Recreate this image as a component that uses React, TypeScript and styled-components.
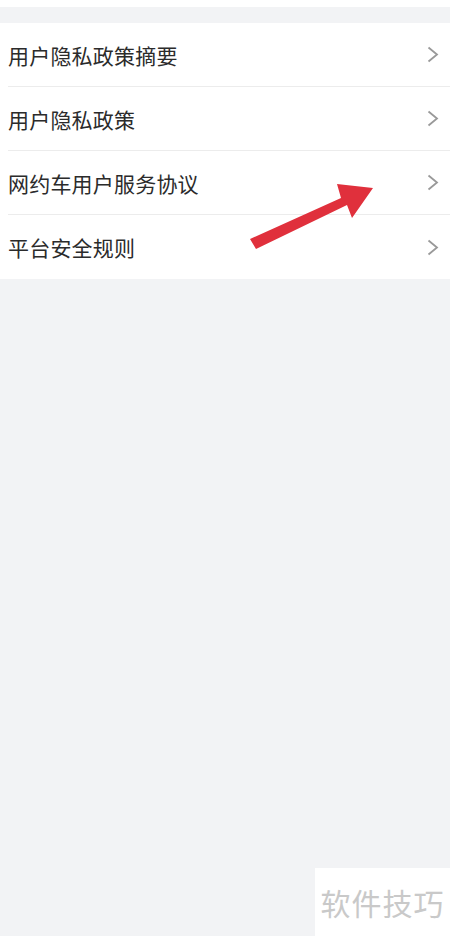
import styled, { createGlobalStyle } from "styled-components";

const GlobalStyle = createGlobalStyle`
  html, body {
    margin: 0;
    padding: 0;
    background: #f2f3f5;
  }
  body {
    font-family: "Noto Sans CJK SC", "Noto Sans", sans-serif;
  }
`;

const Page = styled.div`
  width: 450px;
  height: 936px;
  background: #f2f3f5;
  display: flex;
  flex-direction: column;
  position: relative;
  overflow: hidden;
`;

const TopStrip = styled.div`
  height: 7px;
  background: #ffffff;
`;

const Gap = styled.div`
  height: 16px;
`;

const List = styled.div`
  background: #ffffff;
  display: flex;
  flex-direction: column;
`;

const Row = styled.div<{ $last?: boolean }>`
  height: 64px;
  margin-left: 8px;
  padding-right: 11px;
  display: flex;
  align-items: center;
  justify-content: space-between;
  border-bottom: ${(p) => (p.$last ? "none" : "1px solid #ececec")};
  box-sizing: border-box;
`;

const Label = styled.span`
  font-size: 21px;
  color: #2b2b2b;
  letter-spacing: 0.2px;
`;

const Chevron = styled.svg`
  width: 12px;
  height: 17px;
  display: block;
`;

const Arrow = styled.svg`
  position: absolute;
  left: 0;
  top: 0;
  pointer-events: none;
`;

const Filler = styled.div`
  flex: 1;
  display: flex;
  align-items: flex-end;
  justify-content: flex-end;
`;

const Watermark = styled.div`
  width: 135px;
  height: 68px;
  background: #ffffff;
  display: flex;
  align-items: center;
  justify-content: center;
  font-size: 30px;
  color: #c9c9c9;
  letter-spacing: 1px;
`;

const items = ["用户隐私政策摘要", "用户隐私政策", "网约车用户服务协议", "平台安全规则"];

export default function App() {
  return (
    <Page>
      <GlobalStyle />
      <TopStrip />
      <Gap />
      <List>
        {items.map((t, i) => (
          <Row key={t} $last={i === items.length - 1}>
            <Label>{t}</Label>
            <Chevron viewBox="0 0 12 17">
              <path d="M1.5 1.5 L10 8.5 L1.5 15.5" fill="none" stroke="#999999" strokeWidth="1.8" />
            </Chevron>
          </Row>
        ))}
      </List>
      <Filler>
        <Watermark>软件技巧</Watermark>
      </Filler>
      <Arrow width="450" height="936" viewBox="0 0 450 936">
        <polygon
          points="250,239 341,198 337,184 373,188 352,218 347,205 256,249"
          fill="#e0303c"
        />
      </Arrow>
    </Page>
  );
}
